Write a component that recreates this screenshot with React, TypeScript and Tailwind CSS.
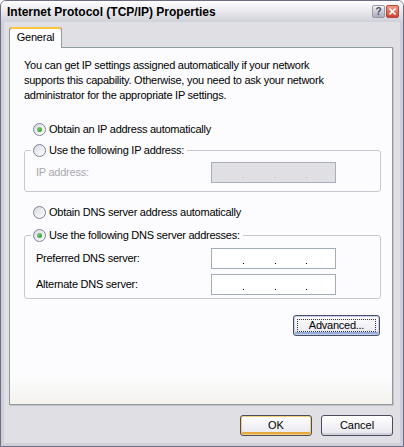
import React from "react";

const font = { fontFamily: '"Liberation Sans", Arial, sans-serif' };

function Radio({ checked }: { checked?: boolean }) {
  return (
    <span className="grid h-[13px] w-[13px] shrink-0 place-items-center rounded-full border border-[#7c8496] bg-gradient-to-br from-[#d8d8e2] to-white">
      {checked && (
        <span className="h-[5px] w-[5px] rounded-full bg-gradient-to-br from-[#7fd27f] to-[#2b9a2b]" />
      )}
    </span>
  );
}

function IpField({ disabled }: { disabled?: boolean }) {
  return (
    <div
      className={`flex h-[21px] w-[125px] items-end border pb-[4px] ${
        disabled ? "border-[#a8aebb] bg-[#e0dfe3]" : "border-[#a4acbc] bg-white"
      }`}
    >
      {[32, 32, 31].map((w, i) => (
        <span key={i} className="flex justify-end" style={{ width: w }}>
          <span className={`h-[1px] w-[1px] ${disabled ? "bg-[#b4b4bc]" : "bg-black"}`} />
        </span>
      ))}
    </div>
  );
}

function Btn({ label, kind }: { label: string; kind?: "default" | "focus" }) {
  const ring =
    kind === "default"
      ? "shadow-[inset_0_0_0_1px_#f6cf7a,inset_0_-2px_0_1px_#e6a845]"
      : kind === "focus"
      ? "shadow-[inset_0_0_0_1px_#c4d4ee,inset_0_-2px_0_1px_#97aedc]"
      : "shadow-[inset_0_-2px_0_0_#d2d2dc]";
  return (
    <button
      className={`relative grid h-[21px] place-items-center rounded-[3px] border border-[#4b4b62] bg-gradient-to-b from-white to-[#e6e6ee] text-[11px] text-black ${ring}`}
    >
      {kind === "focus" && (
        <span className="pointer-events-none absolute inset-[3px] border border-dotted border-[#333]" />
      )}
      {label}
    </button>
  );
}

export default function App() {
  return (
    <div className="h-[447px] w-[404px] bg-white" style={font}>
      <div className="flex h-full flex-col rounded-t-[6px] border border-[#6c6c84] bg-[#e0dfe3]">
        {/* title bar */}
        <div className="flex h-[21px] shrink-0 items-center rounded-t-[5px] bg-gradient-to-b from-white via-[#e8e8ee] to-[#d0d0da] pl-[6px] pr-[4px]">
          <span className="text-[12px] font-bold text-black">Internet Protocol (TCP/IP) Properties</span>
          <div className="ml-auto flex gap-[1px]">
            <span className="grid h-[13px] w-[13px] place-items-center rounded-[2px] border border-[#9a9aa8] bg-gradient-to-b from-[#f4f4f8] to-[#a9a9bb] text-[10px] font-bold leading-none text-[#4a4a5a]">
              ?
            </span>
            <span className="grid h-[13px] w-[13px] place-items-center rounded-[2px] border border-[#b04a3c] bg-gradient-to-b from-[#f39b8a] to-[#d2402e]">
              <svg width="7" height="7" viewBox="0 0 7 7">
                <path d="M0.5 0.5 L6.5 6.5 M6.5 0.5 L0.5 6.5" stroke="white" strokeWidth="1.6" />
              </svg>
            </span>
          </div>
        </div>

        {/* body */}
        <div className="flex flex-1 flex-col border-x-[3px] border-b-[3px] border-[#cfcfda] pl-[5px] pr-[7px]">
          <div className="flex pt-[5px]">
            <div className="relative z-10 -mb-px flex h-[21px] w-[53px] items-center justify-center rounded-t-[3px] border-x border-[#919b9c] bg-gradient-to-b from-white to-[#fcfcfe] text-[11px] tracking-[-0.2px] text-black shadow-[inset_0_2px_0_#ffc73c,inset_0_1px_0_#e68b2c]">
              General
            </div>
          </div>

          <div className="flex flex-1 flex-col border border-[#919b9c] bg-gradient-to-b from-[#fcfcfe] via-[#fcfcfe] via-92% to-[#f4f3ee] pl-[14px] pr-[11px] pt-[10px] text-[11px] tracking-[-0.25px] text-black shadow-[1px_1px_0_#c4c4cc]">
            <p className="leading-[15px]">
              You can get IP settings assigned automatically if your network
              <br />
              supports this capability. Otherwise, you need to ask your network
              <br />
              administrator for the appropriate IP settings.
            </p>

            <label className="mt-[18px] flex h-[16px] items-center gap-[3px] pl-[9px]">
              <Radio checked />
              <span>Obtain an IP address automatically</span>
            </label>

            <fieldset className="mt-[5px] rounded-[3px] border border-[#c8c8d2]">
              <legend className="ml-[6px] flex h-[16px] items-center gap-[3px] pl-[2px] pr-[3px]">
                <Radio />
                <span>Use the following IP address:</span>
              </legend>
              <div className="mt-[4px] flex items-center pb-[8px] pl-[11px]">
                <span className="w-[175px] text-[#a8a8b0]">IP address:</span>
                <IpField disabled />
              </div>
            </fieldset>

            <label className="mt-[12px] flex h-[16px] items-center gap-[3px] pl-[9px]">
              <Radio />
              <span>Obtain DNS server address automatically</span>
            </label>

            <fieldset className="mt-[7px] rounded-[3px] border border-[#c8c8d2]">
              <legend className="ml-[6px] flex h-[16px] items-center gap-[3px] pl-[2px] pr-[3px]">
                <Radio checked />
                <span>Use the following DNS server addresses:</span>
              </legend>
              <div className="mt-[5px] flex flex-col gap-[5px] pb-[3px] pl-[11px]">
                <div className="flex items-center">
                  <span className="w-[175px]">Preferred DNS server:</span>
                  <IpField />
                </div>
                <div className="flex items-center">
                  <span className="w-[175px]">Alternate DNS server:</span>
                  <IpField />
                </div>
              </div>
            </fieldset>

            <div className="mt-[16px] flex justify-end pr-[1px]">
              <div className="grid w-[87px]">
                <Btn label="Advanced..." kind="focus" />
              </div>
            </div>
          </div>

          <div className="flex h-[38px] shrink-0 justify-end gap-[9px] pt-[10px]">
            <div className="grid w-[72px]">
              <Btn label="OK" kind="default" />
            </div>
            <div className="grid w-[72px]">
              <Btn label="Cancel" />
            </div>
          </div>
        </div>
      </div>
    </div>
  );
}
